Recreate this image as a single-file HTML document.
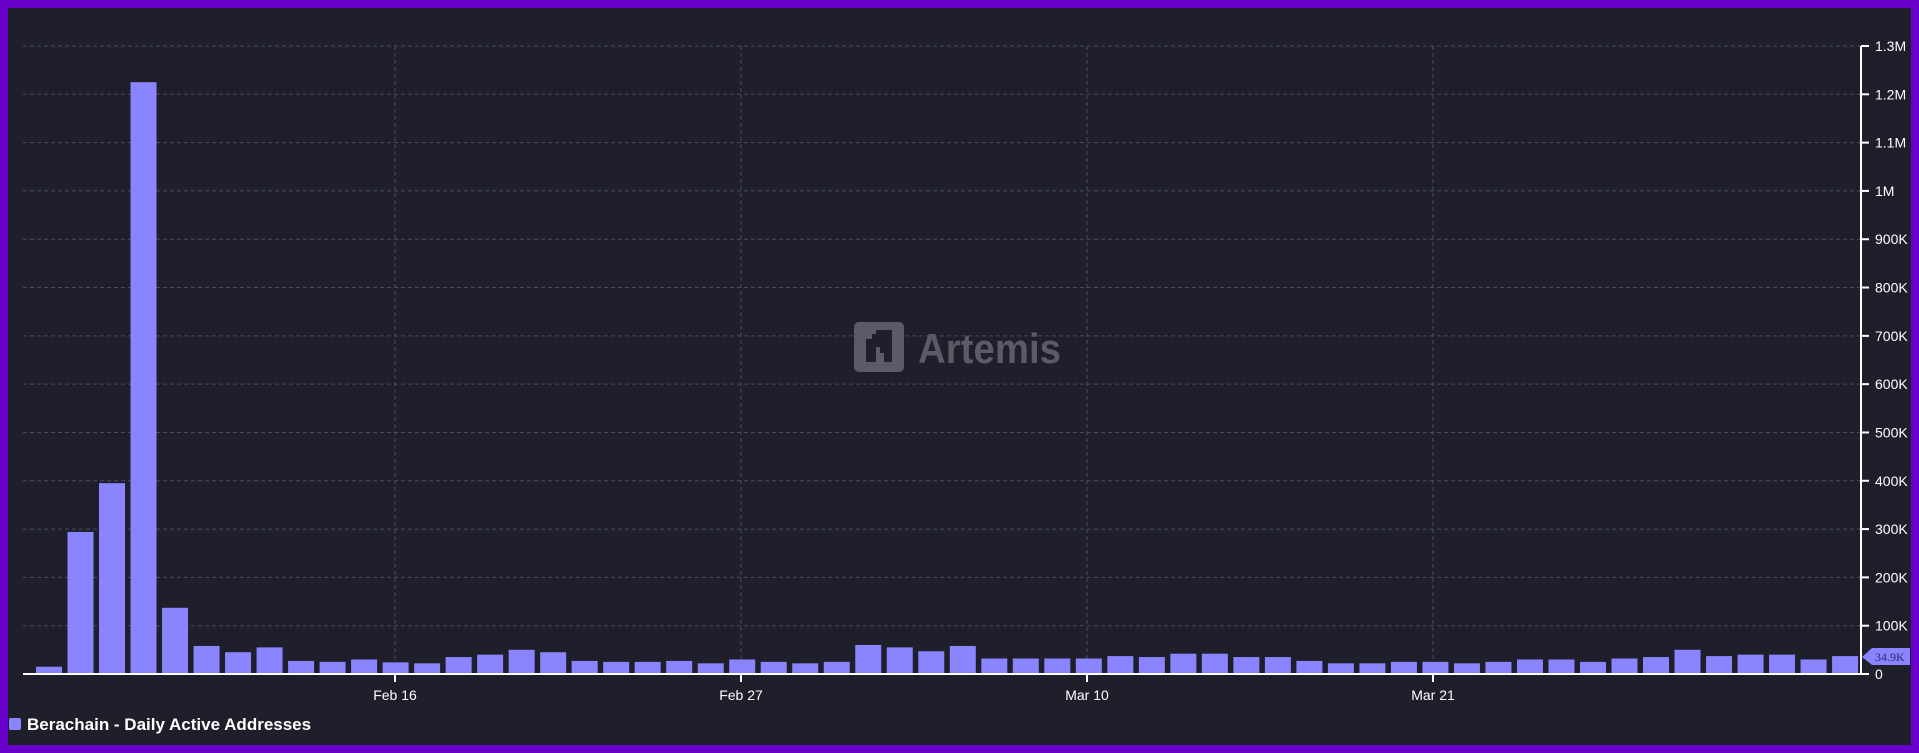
<!DOCTYPE html><html><head><style>
html,body{margin:0;padding:0;background:#6a00cc;}
svg{display:block}
</style></head><body>
<svg width="1919" height="753" xmlns="http://www.w3.org/2000/svg" font-family="'Liberation Sans', sans-serif">
<rect width="1919" height="753" fill="#6a00cc"/>
<rect x="8" y="8" width="1903" height="737" fill="#1e1f2b"/>
<g id="grid" stroke="#4a4c58" stroke-width="1" stroke-dasharray="4,3"></g>
<g id="bars" fill="#8a84ff"></g>
<rect x="854" y="322" width="50" height="50" rx="5" fill="#5a5b66"/>
<path d="M866 339h6v-5h4v-4h16v32h-8v-9h-4v-6h-4v15h-10z" fill="#1e1f2b"/>
<text x="918" y="363" font-size="42" font-weight="bold" fill="#5a5b66" textLength="143" lengthAdjust="spacingAndGlyphs">Artemis</text>
<line x1="23" y1="674" x2="1868" y2="674" stroke="#fff" stroke-width="2"/>
<line x1="1861" y1="46" x2="1861" y2="674" stroke="#fff" stroke-width="2"/>
<g id="ylab" fill="#fff" font-size="14"></g>
<g fill="#fff" font-size="14" text-anchor="middle">
<line x1="395" y1="674" x2="395" y2="682" stroke="#fff" stroke-width="2"/><text x="395" y="700">Feb 16</text>
<line x1="741" y1="674" x2="741" y2="682" stroke="#fff" stroke-width="2"/><text x="741" y="700">Feb 27</text>
<line x1="1087" y1="674" x2="1087" y2="682" stroke="#fff" stroke-width="2"/><text x="1087" y="700">Mar 10</text>
<line x1="1433" y1="674" x2="1433" y2="682" stroke="#fff" stroke-width="2"/><text x="1433" y="700">Mar 21</text>
</g>
<path d="M1862 657l10-9h38v17h-38z" fill="#8a84ff"/>
<text x="1875" y="661" font-size="12" font-family="'Liberation Serif', serif" fill="#2b2d6a">34.9K</text>
<rect x="9" y="718" width="12" height="12" rx="2" fill="#8a84ff"/>
<text x="27" y="730" font-size="17" font-weight="bold" fill="#fff">Berachain - Daily Active Addresses</text>
</svg>
<script>
var ns="http://www.w3.org/2000/svg";
function el(p,t,a){var e=document.createElementNS(ns,t);for(var k in a)e.setAttribute(k,a[k]);document.getElementById(p).appendChild(e);return e;}
var y0=674,u=(674-46)/13;
var lab=["0","100K","200K","300K","400K","500K","600K","700K","800K","900K","1M","1.1M","1.2M","1.3M"];
for(var i=0;i<=13;i++){var y=y0-i*u;
 if(i>0)el("grid","line",{x1:23,y1:y,x2:1861,y2:y});
 el("ylab","line",{x1:1861,y1:y,x2:1869,y2:y,stroke:"#fff","stroke-width":2});
 var t=el("ylab","text",{x:1875,y:y+5});t.textContent=lab[i];}
[395,741,1087,1433].forEach(function(x){el("grid","line",{x1:x,y1:46,x2:x,y2:674});});
var v=[13,292,393,1223,135,56,43,53,25,23,28,22,20,33,38,48,43,25,23,23,25,20,28,23,20,23,58,53,45,56,30,30,30,30,35,33,40,40,33,33,25,20,20,23,23,20,23,28,28,23,30,33,48,35,38,38,28,35];
for(var i=0;i<v.length;i++){var h=v[i]/100*u;el("bars","rect",{x:36+i*31.51,y:673-h,width:26,height:h});}
</script>
</body></html>
